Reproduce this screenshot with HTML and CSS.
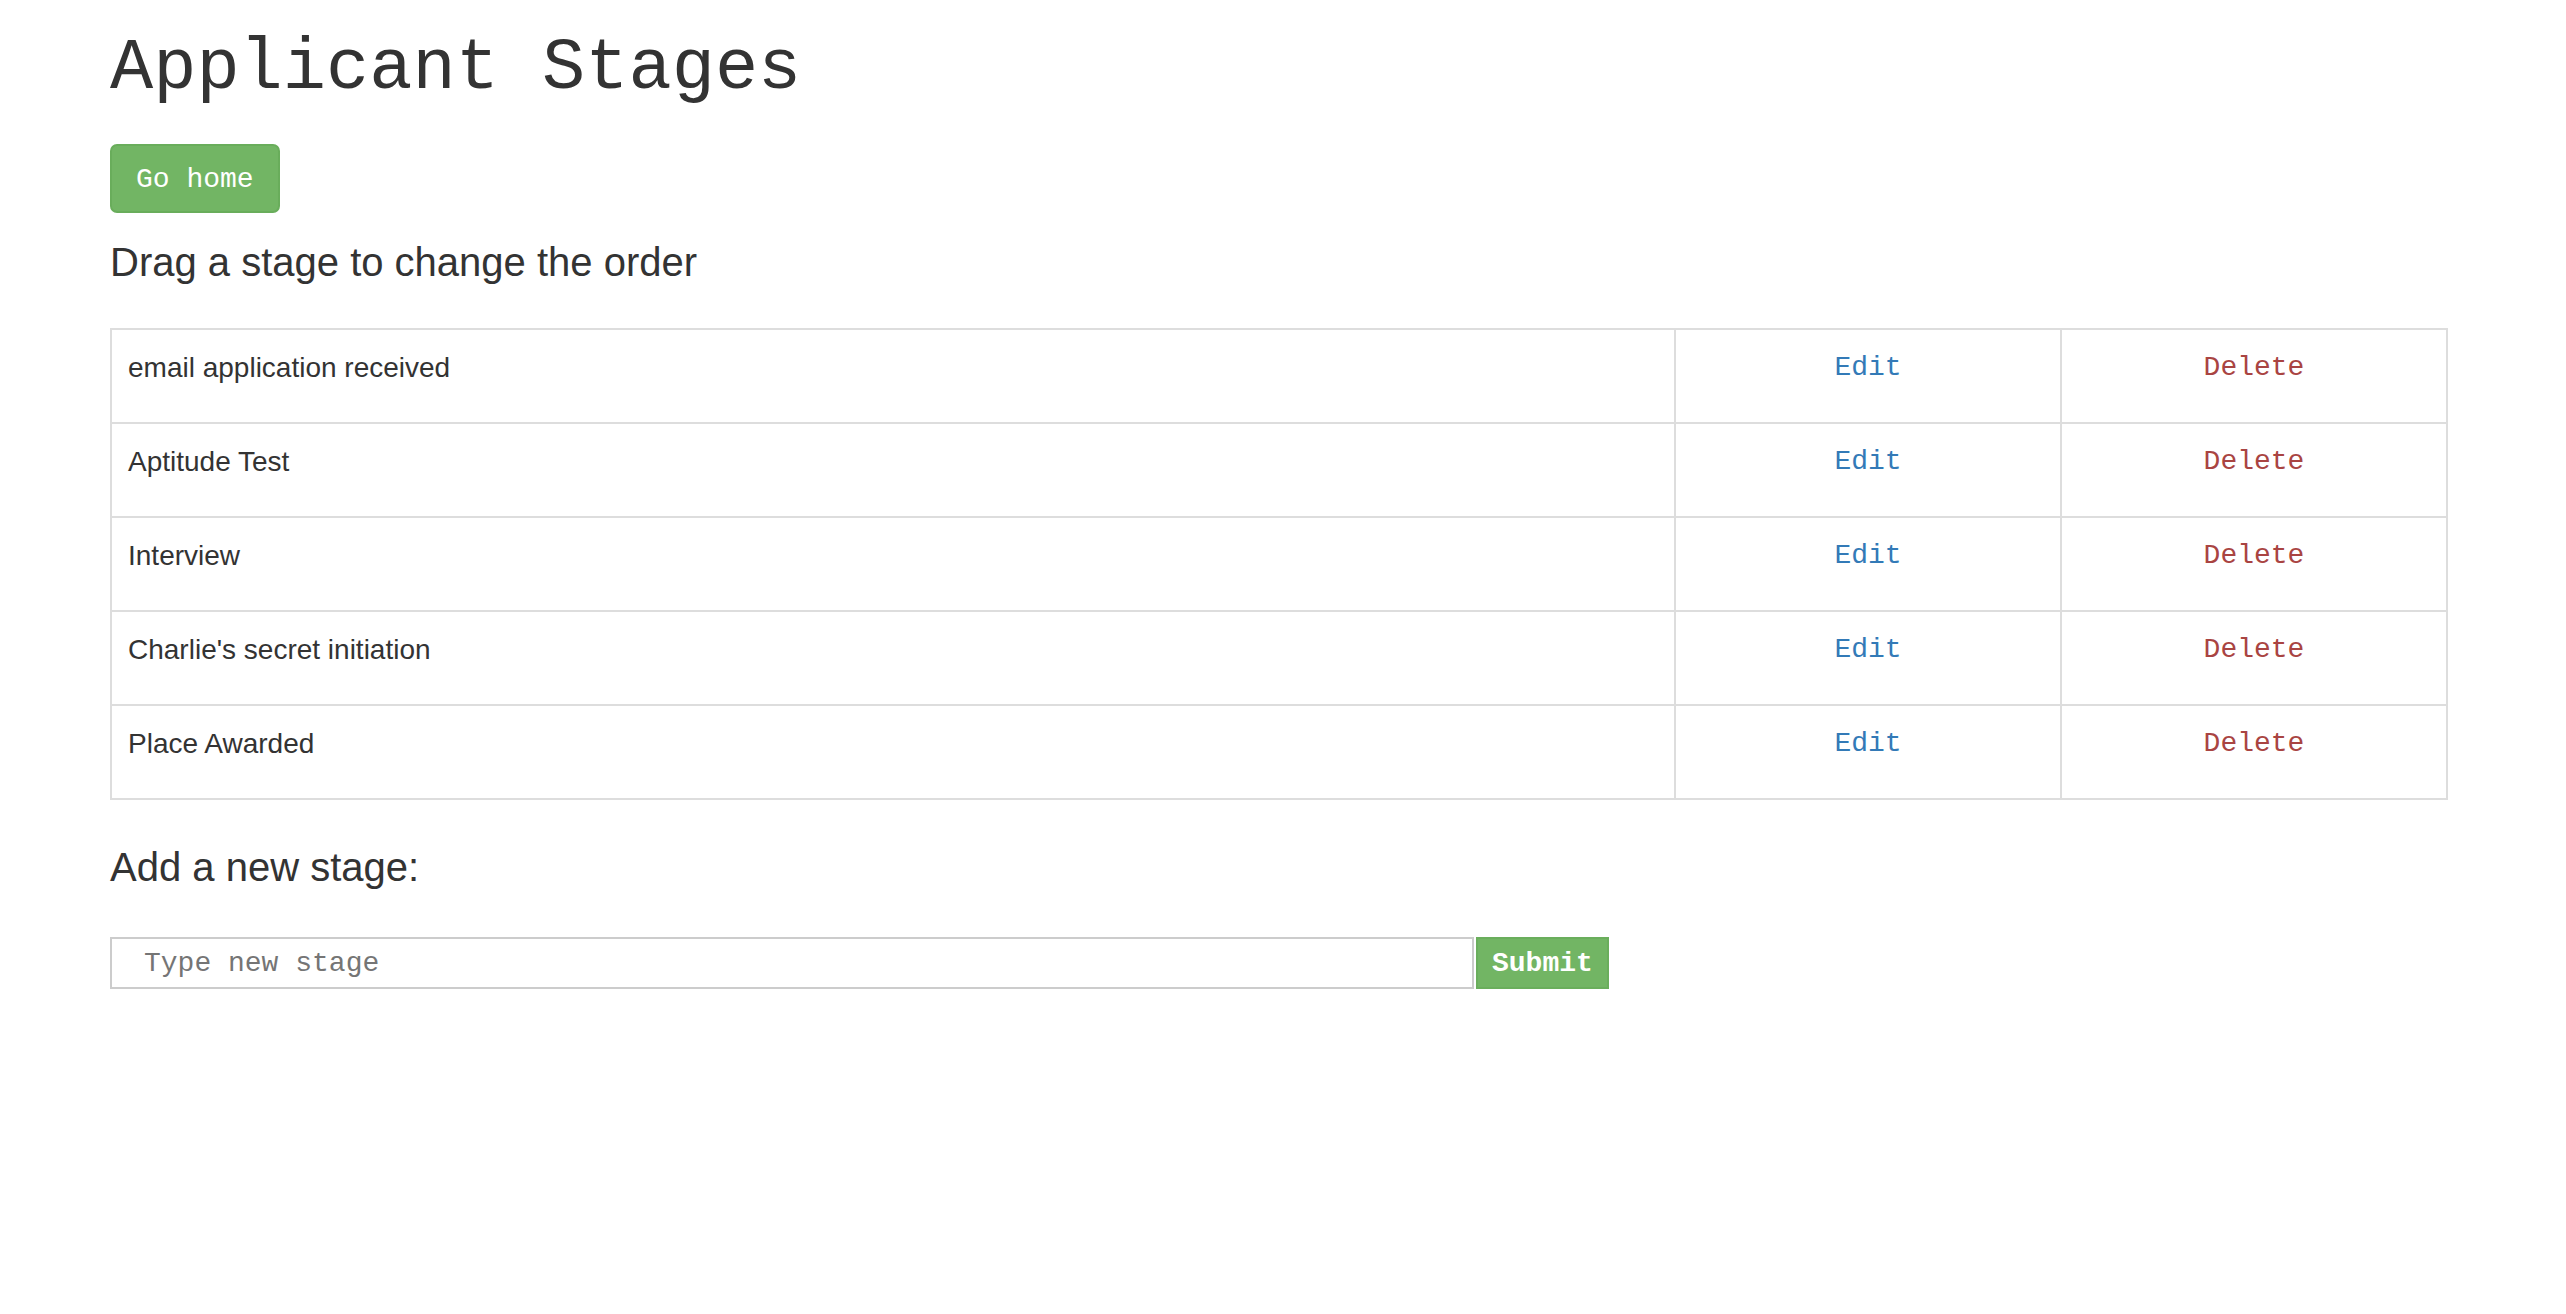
FILE: index.html
```html
<!DOCTYPE html>
<html>
<head>
<meta charset="utf-8">
<title>Applicant Stages</title>
<link rel="stylesheet" href="styles.css">
</head>
<body>
<div class="container">
  <h1 class="title">Applicant Stages</h1>
  <a class="btn btn-home" href="#">Go home</a>
  <h4 class="subtitle">Drag a stage to change the order</h4>
  <table class="stages">
    <tbody>
      <tr><td class="name">email application received</td><td class="act"><a class="edit" href="#">Edit</a></td><td class="act"><a class="delete" href="#">Delete</a></td></tr>
      <tr><td class="name">Aptitude Test</td><td class="act"><a class="edit" href="#">Edit</a></td><td class="act"><a class="delete" href="#">Delete</a></td></tr>
      <tr><td class="name">Interview</td><td class="act"><a class="edit" href="#">Edit</a></td><td class="act"><a class="delete" href="#">Delete</a></td></tr>
      <tr><td class="name">Charlie's secret initiation</td><td class="act"><a class="edit" href="#">Edit</a></td><td class="act"><a class="delete" href="#">Delete</a></td></tr>
      <tr><td class="name">Place Awarded</td><td class="act"><a class="edit" href="#">Edit</a></td><td class="act"><a class="delete" href="#">Delete</a></td></tr>
    </tbody>
  </table>
  <h3 class="add-title">Add a new stage:</h3>
  <form class="add-form">
    <input class="stage-input" type="text" placeholder="Type new stage">
    <button class="submit" type="button">Submit</button>
  </form>
</div>
</body>
</html>
```

FILE: styles.css
```css
html, body {
  margin: 0;
  padding: 0;
  background: #fff;
}
body {
  font-family: "Liberation Sans", Arial, sans-serif;
  color: #333;
  font-size: 28px;
}
.container {
  margin-left: 110px;
  width: 2338px;
}
.title,
.btn-home,
.stages td.act,
.stage-input,
.submit {
  font-family: "Courier New", "Nimbus Mono PS", "FreeMono", "Liberation Mono", monospace;
}
.title {
  font-weight: normal;
  font-size: 72px;
  line-height: 80px;
  margin: 29px 0 35px 0;
  color: #333;
}
.btn {
  display: inline-block;
  text-decoration: none;
}
.btn-home {
  font-size: 28px;
  line-height: 40px;
  padding: 14px 24px 11px;
  color: #fff;
  background: #72b564;
  border: 2px solid #69ad5b;
  border-radius: 7px;
}
.subtitle {
  font-weight: normal;
  font-size: 40px;
  line-height: 48px;
  margin: 25px 0 42px 0;
}
.stages {
  width: 100%;
  border-collapse: collapse;
  border: 2px solid #ddd;
}
.stages td {
  border: 2px solid #ddd;
  height: 94px;
  box-sizing: border-box;
  vertical-align: top;
  padding: 18px 16px 14px;
  line-height: 40px;
}
.stages td.act {
  width: 386px;
  text-align: center;
}
.edit, .delete {
  text-decoration: none;
}
.edit { color: #337ab7; }
.delete { color: #a94442; }
.add-title {
  font-weight: normal;
  font-size: 40px;
  line-height: 48px;
  margin: 43px 0 46px 0;
}
.add-form {
  display: flex;
  align-items: stretch;
  gap: 2px;
}
.stage-input {
  width: 1364px;
  height: 52px;
  box-sizing: border-box;
  border: 2px solid #ccc;
  padding: 0 32px;
  font-size: 28px;
  color: #333;
  margin: 0;
}
.stage-input::placeholder {
  color: #757575;
}
.submit {
  height: 52px;
  box-sizing: border-box;
  margin: 0;
  padding: 0 14px;
  font-weight: bold;
  font-size: 28px;
  color: #fff;
  background: #72b564;
  border: 2px solid #6aae5c;
  border-radius: 0;
}
```
